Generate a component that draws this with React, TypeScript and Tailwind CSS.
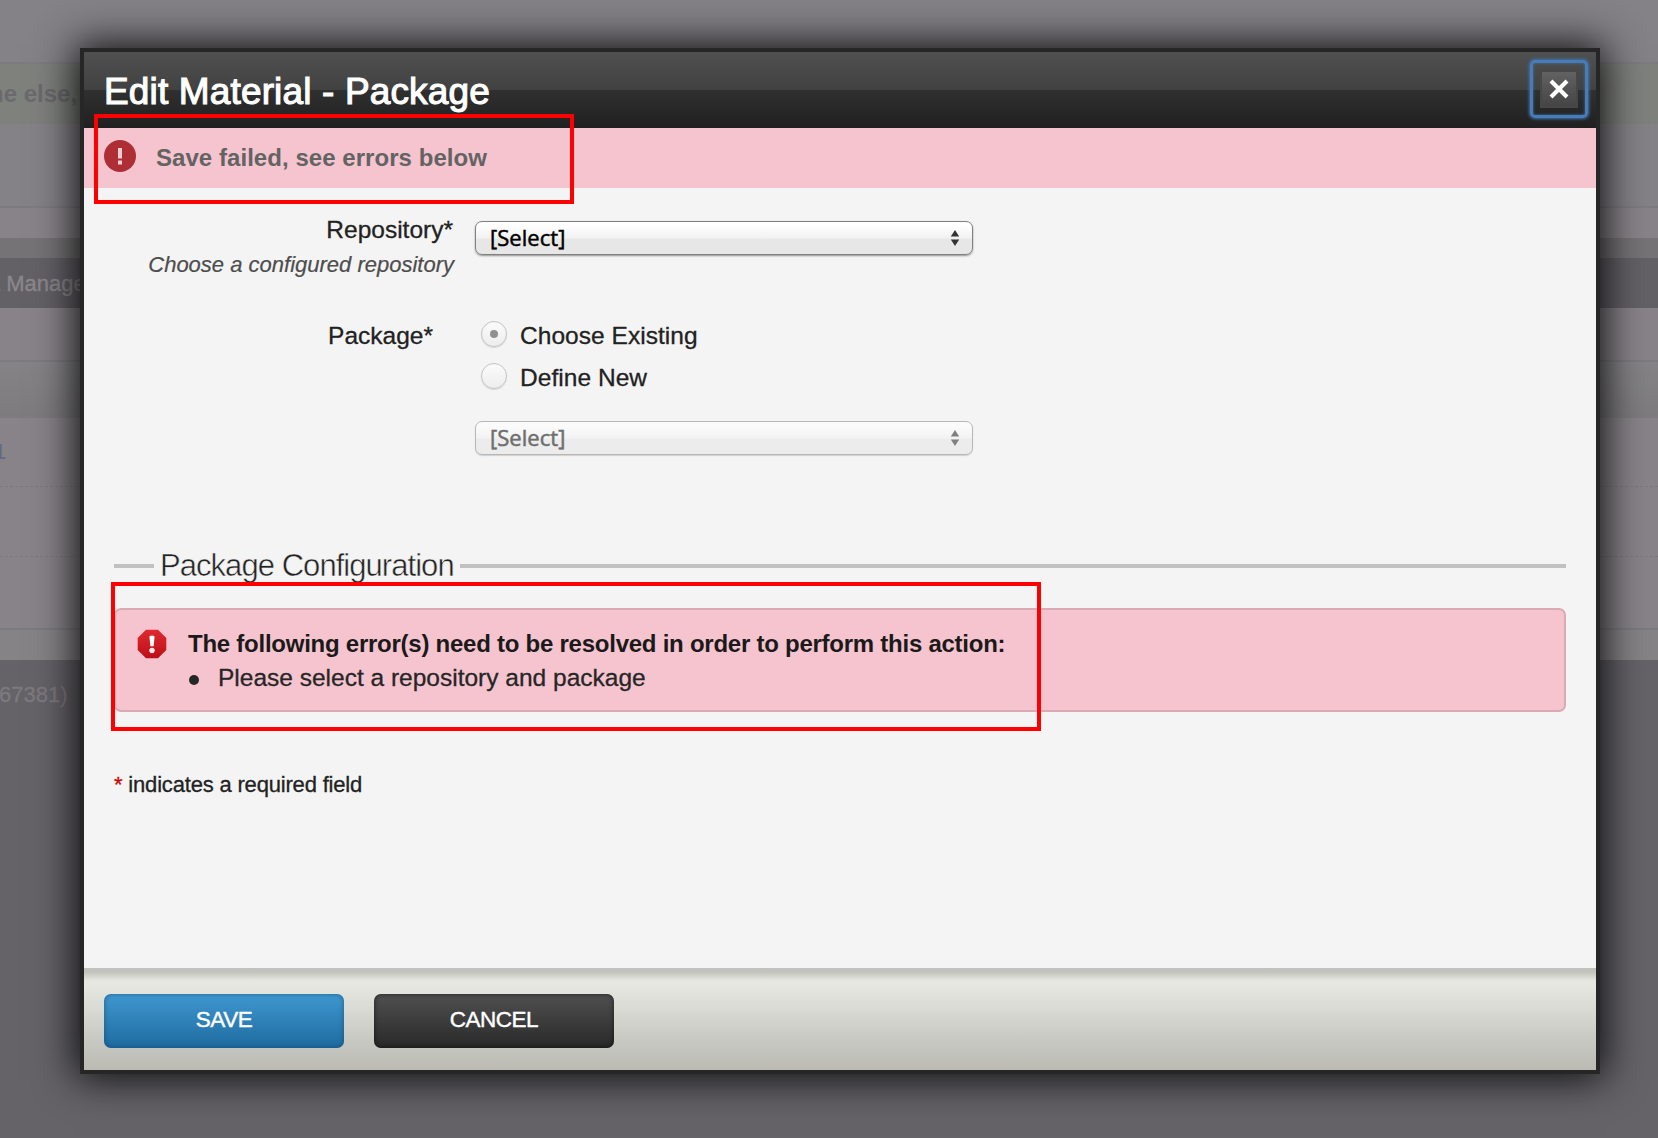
import React from "react";

function Backdrop() {
  return (
    <div className="flex h-full w-full flex-col overflow-hidden whitespace-nowrap bg-[#878388]">
      <div className="h-[62px] shrink-0 bg-[#858287]" />
      <div className="h-[62px] shrink-0 border-t-2 border-[#7c7b80] bg-[#7f817d]">
        <div className="-ml-[11px] pt-[15px] text-[24px] leading-[30px] font-bold text-[#6b696e]">ne else,</div>
      </div>
      <div className="h-[82px] shrink-0 bg-[#858287]" />
      <div className="h-[32px] shrink-0 border-t-2 border-[#7c7b80] bg-[#878388]" />
      <div className="h-[20px] shrink-0 bg-[#757375]" />
      <div className="h-[50px] shrink-0 bg-[#646166]">
        <div className="-ml-[6px] pt-[11px] text-[22px] leading-[30px] text-[#8b888d] [-webkit-text-stroke:0.3px_currentColor]">t Manage</div>
      </div>
      <div className="h-[52px] shrink-0 bg-[#878388]" />
      <div className="h-[58px] shrink-0 border-t-2 border-[#7c7b80] bg-linear-to-b from-[#858386] to-[#7d7b7e]" />
      <div className="h-[68px] shrink-0 bg-[#878388]">
        <div className="-ml-[6px] pt-[19px] text-[22px] leading-[30px] text-[#656984]">1</div>
      </div>
      <div className="h-[70px] shrink-0 border-t border-dashed border-[#7b797f]" />
      <div className="h-[72px] shrink-0 border-t border-dashed border-[#7b797f]" />
      <div className="h-[32px] shrink-0 border-t-2 border-[#7c7a7f] bg-[#868386]" />
      <div className="grow bg-[#656368]">
        <div className="-ml-px pt-[20px] text-[22px] leading-[30px] text-[#7d7a7f] [-webkit-text-stroke:0.3px_currentColor]">67381)</div>
      </div>
    </div>
  );
}

function SelectBox({ disabled = false }: { disabled?: boolean }) {
  return (
    <div
      className={
        disabled
          ? "flex h-[34px] w-[498px] items-center justify-between rounded-[7px] border-[1.5px] border-[#b7b7b7] bg-linear-to-b from-[#fbfbfb] from-10% via-[#f3f3f3] via-50% to-[#ececec] to-55% pr-[12px] pl-[14px] text-[#6e6e6e] shadow-[0_1px_1px_rgba(0,0,0,0.15)]"
          : "flex h-[34px] w-[498px] items-center justify-between rounded-[7px] border-[1.5px] border-[#808080] bg-linear-to-b from-[#ffffff] from-10% via-[#f2f2f2] via-50% to-[#e7e7e7] to-55% pr-[12px] pl-[14px] text-black shadow-[0_1px_2px_rgba(0,0,0,0.4)]"
      }
    >
      <span className="pb-px font-['Open_Sans','Noto_Sans',sans-serif] text-[22px] leading-[29px] tracking-[0.05px] [-webkit-text-stroke:0.5px_currentColor]">
        [Select]
      </span>
      <svg width="10" height="18" viewBox="0 0 10 18" className={disabled ? "-mt-px text-[#808080]" : "-mt-px text-[#333]"} fill="currentColor">
        <path d="M5 1 9.200 7.500H0.800ZM5 17 9.200 10.500H0.800Z" />
      </svg>
    </div>
  );
}

function Radio({ label, checked = false }: { label: string; checked?: boolean }) {
  return (
    <div className="flex h-[42px] items-center">
      <span className="flex size-[26px] items-center justify-center rounded-full border-[1.5px] border-[#c4c4c4] bg-linear-to-b from-[#fbfbfb] to-[#ededed] shadow-[0_1px_1px_rgba(0,0,0,0.12)]">
        {checked && <span className="size-[8px] rounded-full bg-[#909090]" />}
      </span>
      <span className="ml-[13px] pt-[3px] text-[24.5px] leading-[30px] tracking-[0.04px] [-webkit-text-stroke:0.3px_currentColor]">{label}</span>
    </div>
  );
}

function Header() {
  return (
    <div className="flex h-[76px] items-start justify-between bg-[linear-gradient(to_bottom,#505050,#414141_50%,#303030_50%,#202020)] pr-[8px] pl-[20px]">
      <h1 className="pt-[19px] text-[37px] leading-[42px] tracking-[0.15px] text-white [-webkit-text-stroke:1.1px_white]">
        Edit Material - Package
      </h1>
      <button className="mt-[8px] flex size-[58px] items-center justify-center rounded-[5px] border-[3px] border-[#477cb8] shadow-[0_0_3px_1px_#3f74b0,inset_0_0_3px_#3f74b0]">
        <span className="flex size-[38px] items-center justify-center border-2 border-[#474747] bg-linear-to-b from-[#626262] to-[#454545]">
          <svg width="20" height="20" viewBox="0 0 20 20" stroke="white" strokeWidth="4.200" fill="none">
            <path d="M2 2 18 18M18 2 2 18" />
          </svg>
        </span>
      </button>
    </div>
  );
}

function SaveFailed() {
  return (
    <div className="flex h-[60px] bg-[#f6c4cf] pl-[20px]">
      <svg width="32" height="34" viewBox="0 0 32 34" className="mt-[11px]">
        <circle cx="16" cy="17" r="16" fill="#ae2e36" />
        <path d="M14 9h4v10.500h-4zM14 21.500h4v4h-4z" fill="#f3cdd4" />
      </svg>
      <span className="mt-[15px] ml-[20px] text-[24px] leading-[30px] font-bold tracking-[0.05px] text-[#636363]">
        Save failed, see errors below
      </span>
    </div>
  );
}

function ErrorBox() {
  return (
    <div className="flex h-[104px] rounded-[7px] border-2 border-[#daabb5] bg-[#f6c4cf] pl-[21px]">
      <svg width="30" height="30" viewBox="0 0 30 30" className="mt-[19px] shrink-0">
        <defs>
          <linearGradient id="stop" x1="0" y1="0" x2="0" y2="1">
            <stop offset="0" stopColor="#dd2a31" />
            <stop offset="1" stopColor="#bd0e17" />
          </linearGradient>
        </defs>
        <path d="M9 .7h12L29.300 9v12L21 29.300H9L.7 21V9Z" fill="url(#stop)" />
        <path d="M12.400 7.500q2.600-2 5.200 0l-1 9.700h-3.200z" fill="#fff" />
        <circle cx="15" cy="21.500" r="2.700" fill="#fbe9ec" />
      </svg>
      <div className="ml-[21px] pt-[18px]">
        <div className="text-[24px] leading-[32px] font-bold tracking-[-0.25px] text-[#1a1a1a]">
          The following error(s) need to be resolved in order to perform this action:
        </div>
        <div className="flex items-center pt-px">
          <span className="mt-[4px] ml-px size-[10px] rounded-full bg-[#262626]" />
          <span className="ml-[19px] text-[24.5px] leading-[34px] text-[#262626] [-webkit-text-stroke:0.3px_currentColor]">
            Please select a repository and package
          </span>
        </div>
      </div>
    </div>
  );
}

export default function App() {
  return (
    <div className="relative h-[1138px] w-[1658px] overflow-hidden font-['Liberation_Sans',Arial,sans-serif] text-[#222]">
      <Backdrop />
      <div className="absolute top-[48px] left-[80px] flex h-[1026px] w-[1520px] flex-col border-4 border-[#262626] bg-[#f4f4f4] whitespace-nowrap shadow-[0_0_38px_4px_rgba(0,0,0,0.9)]">
        <Header />
        <SaveFailed />
        <div className="flex grow flex-col pr-[30px] pl-[30px]">
          <div className="flex pt-[26px]">
            <div className="w-[340px] pt-px text-right">
              <div className="pr-px text-[24.5px] leading-[30px] [-webkit-text-stroke:0.3px_currentColor]">Repository*</div>
              <div className="pt-[7px] text-[22px] leading-[26px] text-[#4d4d4d] italic [-webkit-text-stroke:0.2px_currentColor]">
                Choose a configured repository
              </div>
            </div>
            <div className="pt-[7px] pl-[21px]">
              <SelectBox />
            </div>
          </div>
          <div className="flex pt-[35px]">
            <div className="w-[319px] text-right text-[24.5px] leading-[46px] [-webkit-text-stroke:0.3px_currentColor]">
              Package*
            </div>
            <div className="flex flex-col pl-[42px]">
              <div className="flex flex-col pl-[6px]">
                <Radio label="Choose Existing" checked />
                <Radio label="Define New" />
              </div>
              <div className="pt-[24px]">
                <SelectBox disabled />
              </div>
            </div>
          </div>
          <div className="mt-[91px] flex h-[40px] items-center">
            <span className="h-[4px] w-[40px] bg-[#c1c1c1]" />
            <h2 className="w-[306px] pl-[6px] text-[31px] leading-[38px] tracking-[-0.95px] [-webkit-text-stroke:0.5px_#f4f4f4]">
              Package Configuration
            </h2>
            <span className="h-[4px] grow bg-[#c1c1c1]" />
          </div>
          <div className="mt-[22px]">
            <ErrorBox />
          </div>
          <div className="mt-[58px] text-[22px] leading-[30px] tracking-[-0.18px] [-webkit-text-stroke:0.3px_currentColor]">
            <span className="text-[#c00]">*</span> indicates a required field
          </div>
        </div>
        <div className="flex h-[102px] gap-[30px] bg-[linear-gradient(to_bottom,#c0c0bd,#c3c3be_4%,#e5e6df_12%,#e7e8e1_16%,#c8c9c3_70%,#bbbbb4)] pt-[26px] pl-[20px] text-[22.5px] text-white">
          <button className="h-[54px] w-[240px] rounded-[7px] bg-linear-to-b from-[#3f98d0] to-[#1e6ba0] pb-[2px] tracking-[-0.5px] shadow-[inset_0_0_5px_rgba(10,60,100,0.6)] [-webkit-text-stroke:0.4px_white]">
            SAVE
          </button>
          <button className="h-[54px] w-[240px] rounded-[7px] bg-linear-to-b from-[#505050] to-[#292929] pb-[2px] tracking-[-0.5px] shadow-[inset_0_0_5px_rgba(0,0,0,0.6)] [-webkit-text-stroke:0.4px_white]">
            CANCEL
          </button>
        </div>
      </div>
      <div className="absolute top-[114px] left-[94px] h-[90px] w-[480px] border-4 border-[#ff0000]" />
      <div className="absolute top-[582px] left-[111px] h-[149px] w-[930px] border-4 border-[#ff0000]" />
    </div>
  );
}
